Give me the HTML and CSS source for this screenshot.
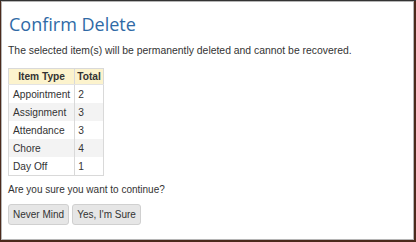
FILE: index.html
```html
<!DOCTYPE html>
<html>
<head>
<meta charset="utf-8">
<link rel="stylesheet" href="styles.css">
</head>
<body>
<div class="dialog">
  <h1 class="title">Confirm Delete</h1>
  <p class="msg">The selected item(s) will be permanently deleted and cannot be recovered.</p>
  <table class="items">
    <thead>
      <tr><th>Item Type</th><th>Total</th></tr>
    </thead>
    <tbody>
      <tr><td>Appointment</td><td>2</td></tr>
      <tr><td>Assignment</td><td>3</td></tr>
      <tr><td>Attendance</td><td>3</td></tr>
      <tr><td>Chore</td><td>4</td></tr>
      <tr><td>Day Off</td><td>1</td></tr>
    </tbody>
  </table>
  <p class="msg question">Are you sure you want to continue?</p>
  <div class="actions">
    <button class="btn">Never Mind</button>
    <button class="btn">Yes, I'm Sure</button>
  </div>
</div>
</body>
</html>
```
FILE: styles.css
```css
html, body {
  margin: 0;
  padding: 0;
}
body {
  width: 416px;
  height: 242px;
  background: #4b2a1c;
  border-top: 1px solid #333;
  box-sizing: border-box;
  font-family: "Liberation Sans", Arial, sans-serif;
  color: #333;
  overflow: hidden;
}
.dialog {
  margin: 0 2px 0 1px;
  height: 239px;
  box-sizing: border-box;
  background: #fff;
  border: 1px solid #b5b5b5;
  padding: 8px 6px;
}
.title {
  margin: 0;
  padding-left: 1px;
  font-family: "Open Sans", sans-serif;
  font-weight: normal;
  font-size: 18px;
  line-height: 28px;
  color: #2f6aa6;
}
.msg {
  margin: 6px 0 0;
  font-size: 10.4px;
  line-height: 14px;
}
.items {
  margin-top: 10px;
  border-collapse: collapse;
  font-size: 10.2px;
  border: 1px solid #d9d9d9;
}
.items th, .items td {
  border-left: 1px solid #d9d9d9;
  padding: 0 3px;
  height: 18px;
  text-align: left;
}
.items th {
  background: #fcf3cd;
  text-align: center;
  font-weight: bold;
  height: 15px;
  padding: 0 2px;
  border-bottom: 1px solid #e3e3e3;
}
.items tbody tr:nth-child(even) td {
  background: #f3f3f3;
}
.items td:first-child {
  padding: 0 4px;
}
.question {
  margin-top: 7px;
  font-size: 10px;
}
.actions {
  display: flex;
  gap: 3px;
  margin-top: 7px;
}
.btn {
  font-family: "Liberation Sans", Arial, sans-serif;
  font-size: 10px;
  color: #333;
  background: #e6e6e6;
  border: 1px solid #d0d0d0;
  border-radius: 3px;
  height: 21px;
  padding: 0 4px;
}
```
